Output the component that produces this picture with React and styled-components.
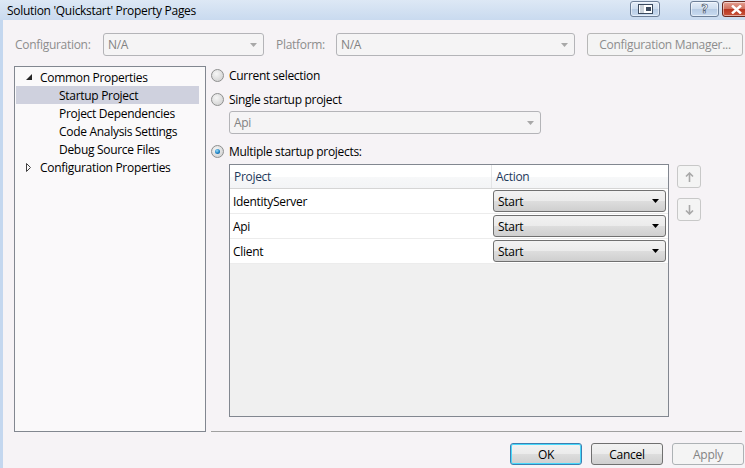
import React from 'react';
import styled, { createGlobalStyle, css } from 'styled-components';

const Global = createGlobalStyle`
  html, body {
    margin: 0;
    padding: 0;
    width: 745px;
    height: 468px;
    overflow: hidden;
    font-family: 'Open Sans', 'Noto Sans', sans-serif;
    font-size: 12px;
    letter-spacing: -0.3px;
  }
`;

const rows = ['IdentityServer', 'Api', 'Client'];

const tree = [
  { label: 'Common Properties', level: 0, open: true },
  { label: 'Startup Project', level: 1, selected: true },
  { label: 'Project Dependencies', level: 1 },
  { label: 'Code Analysis Settings', level: 1 },
  { label: 'Debug Source Files', level: 1 },
  { label: 'Configuration Properties', level: 0, open: false },
];

const Arrow = ({ color = '#6d6d6d' }) => (
  <svg width="7" height="4" viewBox="0 0 7 4">
    <path d="M0 0h7L3.5 4z" fill={color} />
  </svg>
);

export default function App() {
  return (
    <>
      <Global />
      <Window>
        <TitleBar>
          <Title>Solution 'Quickstart' Property Pages</Title>
          <CaptionButtons>
            <CaptionBtn $w={30}>
              <svg width="15" height="10" viewBox="0 0 15 10">
                <rect x="0.5" y="0.5" width="14" height="9" fill="#fff" stroke="#3b4a5e" />
                <rect x="8" y="3" width="5" height="4" fill="#3b4a5e" />
                <line x1="3" y1="1" x2="3" y2="9" stroke="#9aa8b8" />
                <line x1="5" y1="1" x2="5" y2="9" stroke="#9aa8b8" />
              </svg>
            </CaptionBtn>
            <CaptionGap />
            <CaptionBtn $w={29}>
              <HelpGlyph>?</HelpGlyph>
            </CaptionBtn>
            <CaptionBtn $w={28} $close>
              <svg width="11" height="9" viewBox="0 0 11 9">
                <path d="M1 0.5l9 8M10 0.5l-9 8" stroke="#fff" strokeWidth="2.4" />
              </svg>
            </CaptionBtn>
          </CaptionButtons>
        </TitleBar>
        <Client>
          <ConfigRow>
            <ConfigLabel $w={89}>Configuration:</ConfigLabel>
            <Combo $w={161} disabled>
              <span>N/A</span>
              <Arrow color="#a8a8a8" />
            </Combo>
            <ConfigLabel $w={61} $gap={11}>Platform:</ConfigLabel>
            <Combo $w={239} disabled>
              <span>N/A</span>
              <Arrow color="#a8a8a8" />
            </Combo>
            <FlatButton $w={156} $gap={12} disabled>
              Configuration Manager...
            </FlatButton>
          </ConfigRow>
          <Main>
            <Tree>
              {tree.map(item => (
                <TreeRow key={item.label} $level={item.level} $selected={item.selected}>
                  {item.level === 0 && (
                    <Expander>
                      {item.open ? (
                        <svg width="6" height="6" viewBox="0 0 6 6">
                          <path d="M6 0v6H0z" fill="#262626" />
                        </svg>
                      ) : (
                        <svg width="5" height="9" viewBox="0 0 5 9">
                          <path d="M0.5 0.5l4 4-4 4z" fill="none" stroke="#404040" />
                        </svg>
                      )}
                    </Expander>
                  )}
                  {item.label}
                </TreeRow>
              ))}
            </Tree>
            <Pane>
              <RadioRow $top={3}>
                <Radio />
                Current selection
              </RadioRow>
              <RadioRow $top={11}>
                <Radio />
                Single startup project
              </RadioRow>
              <Combo $w={312} disabled style={{ margin: '5px 0 0 18px' }}>
                <span>Api</span>
                <Arrow color="#a8a8a8" />
              </Combo>
              <RadioRow $top={11}>
                <Radio $checked />
                Multiple startup projects:
              </RadioRow>
              <TableArea>
                <Table>
                  <HeaderRow>
                    <HeadCell $w={262}>Project</HeadCell>
                    <HeadCell>Action</HeadCell>
                  </HeaderRow>
                  {rows.map(name => (
                    <Row key={name}>
                      <Cell $w={262}>{name}</Cell>
                      <Cell $pad={1}>
                        <ActionSelect>
                          <span>Start</span>
                          <Arrow color="#000" />
                        </ActionSelect>
                      </Cell>
                    </Row>
                  ))}
                </Table>
                <MoveButtons>
                  <MoveBtn>
                    <svg width="9" height="10" viewBox="0 0 9 10">
                      <path d="M4.5 1v9M1 4.5l3.5-3.5 3.5 3.5" fill="none" stroke="#a8a8a8" strokeWidth="1.6" />
                    </svg>
                  </MoveBtn>
                  <MoveBtn>
                    <svg width="9" height="10" viewBox="0 0 9 10">
                      <path d="M4.5 0v9M1 5.5l3.5 3.5 3.5-3.5" fill="none" stroke="#a8a8a8" strokeWidth="1.6" />
                    </svg>
                  </MoveBtn>
                </MoveButtons>
              </TableArea>
              <Separator />
            </Pane>
          </Main>
          <ButtonRow>
            <DialogButton $default>OK</DialogButton>
            <DialogButton>Cancel</DialogButton>
            <DialogButton disabled>Apply</DialogButton>
          </ButtonRow>
        </Client>
      </Window>
    </>
  );
}

const Window = styled.div`
  width: 745px;
  height: 468px;
  display: flex;
  flex-direction: column;
  background: #c4d7ef;
  padding-left: 3px;
  box-sizing: border-box;
`;

const TitleBar = styled.div`
  height: 20px;
  margin-left: -3px;
  padding-left: 7px;
  display: flex;
  align-items: center;
  background: linear-gradient(#dde8f5, #c9daef);
`;

const Title = styled.div`
  color: #000;
  font-size: 12px;
  flex: 1;
`;

const CaptionButtons = styled.div`
  display: flex;
  align-self: flex-start;
  padding-top: 1px;
  margin-right: -5px;
`;

const CaptionGap = styled.div`
  width: 27px;
`;

const CaptionBtn = styled.div`
  width: ${p => p.$w}px;
  height: 16px;
  box-sizing: border-box;
  border: 1px solid #6d7f98;
  border-radius: 3px;
  display: flex;
  align-items: center;
  justify-content: center;
  margin-right: 3px;
  background: linear-gradient(#e4edf8 0%, #cddcee 50%, #b7cbe4 51%, #c9dbf0 100%);
  box-shadow: inset 0 0 0 1px rgba(255, 255, 255, 0.5);
  ${p =>
    p.$close &&
    css`
      border-color: #6a2920;
      background: linear-gradient(#e4a092 0%, #d0705e 50%, #b8341f 51%, #c9553c 100%);
      margin-right: 0;
    `}
`;

const HelpGlyph = styled.span`
  font-family: 'DejaVu Sans', sans-serif;
  font-weight: bold;
  font-size: 12px;
  color: #fff;
  line-height: 1;
  -webkit-text-stroke: 0.6px #3b4a5e;
`;

const Client = styled.div`
  flex: 1;
  background: #f6f3f6;
  display: flex;
  flex-direction: column;
  padding-left: 11px;
  color: #000;
`;

const ConfigRow = styled.div`
  display: flex;
  align-items: center;
  height: 23px;
  margin-top: 13px;
  margin-bottom: 10px;
`;

const ConfigLabel = styled.span`
  color: #8d8d8d;
  padding-left: 1px;
  box-sizing: border-box;
  width: ${p => p.$w}px;
  margin-left: ${p => p.$gap || 0}px;
  flex: none;
  white-space: nowrap;
`;

const Combo = styled.div`
  width: ${p => p.$w}px;
  height: 23px;
  box-sizing: border-box;
  border: 1px solid #b4b4b8;
  border-radius: 3px;
  background: #f5f4f5;
  display: flex;
  align-items: center;
  justify-content: space-between;
  padding: 0 6px 0 4px;
  color: ${p => (p.disabled ? '#828282' : '#000')};
  flex: none;
`;

const FlatButton = styled.div`
  width: ${p => p.$w}px;
  margin-left: ${p => p.$gap || 0}px;
  height: 23px;
  box-sizing: border-box;
  border: 1px solid #b7b7b7;
  border-radius: 3px;
  background: #f4f4f4;
  color: #8d8d8d;
  display: flex;
  align-items: center;
  justify-content: center;
  flex: none;
`;

const Main = styled.div`
  display: flex;
  height: 366px;
`;

const Tree = styled.div`
  width: 192px;
  box-sizing: border-box;
  border: 1px solid #828790;
  background: #faf9fa;
  padding: 1px 6px 0 1px;
  flex: none;
`;

const TreeRow = styled.div`
  height: 18px;
  display: flex;
  align-items: center;
  white-space: nowrap;
  padding-left: ${p => (p.$level ? 43 : 24)}px;
  position: relative;
  ${p =>
    p.$selected &&
    css`
      background: #cfd1de;
    `}
`;

const Expander = styled.span`
  position: absolute;
  left: 10px;
  top: 0;
  height: 18px;
  display: flex;
  align-items: center;
`;

const Pane = styled.div`
  flex: 1;
  display: flex;
  flex-direction: column;
  padding-left: 5px;
`;

const RadioRow = styled.div`
  display: flex;
  align-items: center;
  gap: 5px;
  height: 13px;
  margin-top: ${p => p.$top}px;
  white-space: nowrap;
`;

const Radio = styled.span`
  width: 13px;
  height: 13px;
  box-sizing: border-box;
  border-radius: 50%;
  border: 1px solid #8e8f8f;
  background: radial-gradient(circle at 40% 35%, #f6f6f6 0%, #dcdcdc 60%, #cfcfcf 100%);
  display: flex;
  align-items: center;
  justify-content: center;
  flex: none;
  ${p =>
    p.$checked &&
    css`
      &::after {
        content: '';
        width: 5px;
        height: 5px;
        border-radius: 50%;
        background: radial-gradient(circle at 40% 35%, #9bdcf8 0%, #1f84c6 55%, #0b4c84 100%);
      }
    `}
`;

const TableArea = styled.div`
  display: flex;
  gap: 8px;
  margin: 6px 0 0 18px;
`;

const Table = styled.div`
  width: 440px;
  height: 253px;
  box-sizing: border-box;
  border: 1px solid #828790;
  background: #f0f0f0;
`;

const HeaderRow = styled.div`
  display: flex;
  height: 24px;
  background: linear-gradient(#ffffff 0%, #ffffff 50%, #f7f8f9 51%, #f3f4f6 100%);
  border-bottom: 1px solid #d5d5d5;
  box-sizing: border-box;
`;

const HeadCell = styled.div`
  width: ${p => (p.$w ? `${p.$w}px` : 'auto')};
  flex: ${p => (p.$w ? 'none' : 1)};
  box-sizing: border-box;
  padding-left: 4px;
  display: flex;
  align-items: center;
  color: #1e395b;
  border-right: ${p => (p.$w ? '1px solid #e3e4e6' : 'none')};
`;

const Row = styled.div`
  display: flex;
  height: 25px;
  background: #fff;
  border-bottom: 1px solid #ececec;
  box-sizing: border-box;
`;

const Cell = styled.div`
  width: ${p => (p.$w ? `${p.$w}px` : 'auto')};
  flex: ${p => (p.$w ? 'none' : 1)};
  box-sizing: border-box;
  padding-left: ${p => (p.$pad !== undefined ? p.$pad : 3)}px;
  padding-right: 2px;
  display: flex;
  align-items: center;
`;

const ActionSelect = styled.div`
  flex: 1;
  height: 22px;
  box-sizing: border-box;
  border: 1px solid #707070;
  border-radius: 3px;
  background: linear-gradient(#f2f2f2 0%, #ebebeb 50%, #dddddd 51%, #cfcfcf 100%);
  display: flex;
  align-items: center;
  justify-content: space-between;
  padding: 0 6px 0 4px;
`;

const MoveButtons = styled.div`
  display: flex;
  flex-direction: column;
  gap: 10px;
  margin-top: 1px;
`;

const MoveBtn = styled.div`
  width: 24px;
  height: 23px;
  box-sizing: border-box;
  border: 1px solid #c8c8c8;
  border-radius: 3px;
  background: #f4f4f4;
  display: flex;
  align-items: center;
  justify-content: center;
`;

const Separator = styled.div`
  margin-top: auto;
  height: 1px;
  background: #a0a0a0;
  margin-right: 3px;
`;

const ButtonRow = styled.div`
  display: flex;
  justify-content: flex-end;
  gap: 9px;
  margin-top: 11px;
  padding-right: 1px;
`;

const DialogButton = styled.div`
  width: 72px;
  height: 22px;
  box-sizing: border-box;
  border: 1px solid #707070;
  border-radius: 3px;
  display: flex;
  align-items: center;
  justify-content: center;
  background: linear-gradient(#f2f2f2 0%, #ebebeb 50%, #dddddd 51%, #cfcfcf 100%);
  ${p =>
    p.$default &&
    css`
      border-color: #3c7fb1;
      box-shadow: inset 0 0 0 1px #48d8fb;
    `}
  ${p =>
    p.disabled &&
    css`
      border-color: #adb2b5;
      background: #f4f4f4;
      color: #838383;
    `}
`;
